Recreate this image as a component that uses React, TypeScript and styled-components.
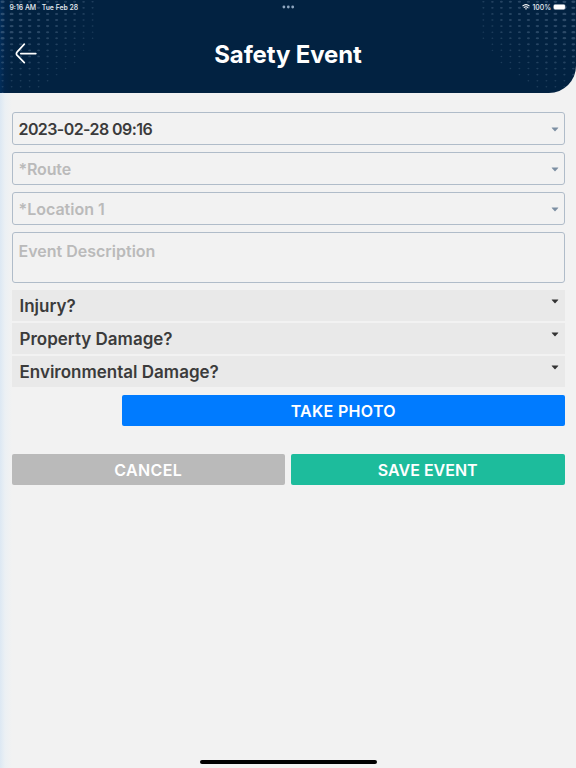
import React from "react";
import styled, { createGlobalStyle } from "styled-components";

const GlobalStyle = createGlobalStyle`
  * { box-sizing: border-box; }
  body { margin: 0; background: #f2f2f2; }
  button { font-family: inherit; }
`;

const Screen = styled.div`
  display: flex;
  flex-direction: column;
  width: 576px;
  height: 768px;
  overflow: hidden;
  color: #3b3b3b;
  font-family: "Inter", "Liberation Sans", sans-serif;
  font-weight: 600;
  background: linear-gradient(90deg, #dce8f3 0, #ebf0f4 5px, #f2f2f2 12px);
`;

const Header = styled.header`
  position: relative;
  flex: none;
  height: 93.4px;
  border-bottom-right-radius: 27px;
  overflow: hidden;
  color: #fff;
  background: linear-gradient(90deg, #022d5a 0, #022448 5px, #022241 12px);
`;

const Halftone = styled.svg`
  position: absolute;
  inset: 0;
  width: 576px;
  height: 94px;
  fill: #6f8aa6;
`;

const StatusBar = styled.div`
  position: relative;
  display: grid;
  grid-template-columns: 1fr auto 1fr;
  align-items: center;
  height: 14px;
  padding: 0 9px 0 9.5px;
  font-size: 6.9px;
  font-weight: 500;
  color: #e8edf2;
`;

const Clock = styled.div`
  display: flex;
  gap: 5.5px;
  white-space: nowrap;
`;

const Multitask = styled.svg`
  width: 13px;
  height: 4px;
  fill: #8fa6bf;
`;

const DeviceStatus = styled.div`
  display: flex;
  align-items: center;
  justify-content: flex-end;
  gap: 2px;
`;

const WifiGlyph = styled.svg`
  width: 8px;
  height: 6px;
`;

const BatteryGlyph = styled.svg`
  width: 14px;
  height: 6px;
`;

const TitleBar = styled.div`
  position: relative;
  display: grid;
  grid-template-columns: 50px 1fr 50px;
  align-items: center;
  height: 80px;
`;

const BackButton = styled.button`
  display: flex;
  width: 50px;
  height: 30px;
  padding: 4px 0 0 14px;
  border: 0;
  background: none;
`;

const Title = styled.h1`
  margin: 2px 0 0;
  font-size: 24px;
  font-weight: 650;
  line-height: 30px;
  letter-spacing: -0.12px;
  text-align: center;
`;

const Form = styled.main`
  display: flex;
  flex-direction: column;
  padding: 19px 11.5px 0;
`;

const FieldStack = styled.div`
  display: flex;
  flex-direction: column;
  gap: 7px;
`;

const SelectField = styled.div<{ $filled?: boolean; $tracking?: number }>`
  display: flex;
  align-items: center;
  justify-content: space-between;
  height: 33px;
  padding: 1px 5px 0 6px;
  border: 1px solid #b0bcc9;
  border-radius: 3px;
  font-size: 16px;
  color: ${(p) => (p.$filled ? "#3b3b3b" : "#bababa")};
  letter-spacing: ${(p) => p.$tracking ?? 0}px;
`;

const DescriptionField = styled.div`
  height: 51px;
  padding: 8px 6px;
  border: 1px solid #b0bcc9;
  border-radius: 3px;
  font-size: 16px;
  line-height: 20px;
  color: #bababa;
`;

const SectionStack = styled.div`
  display: flex;
  flex-direction: column;
  gap: 2px;
  margin-top: 7px;
`;

const Section = styled.div`
  display: flex;
  align-items: flex-start;
  justify-content: space-between;
  height: 31px;
  padding: 5px 6px 0 8px;
  font-size: 17px;
  line-height: 23px;
  background: #e9e9e9;
`;

const Caret = styled.svg<{ $dark?: boolean }>`
  flex: none;
  width: 8px;
  height: 5px;
  margin-top: ${(p) => (p.$dark ? 4 : 1)}px;
  fill: ${(p) => (p.$dark ? "#333" : "#7d8fa3")};
`;

const PhotoRow = styled.div`
  display: flex;
  padding-left: 110.5px;
  margin-top: 8px;
`;

const ActionRow = styled.div`
  display: flex;
  gap: 6px;
  margin-top: 28px;
`;

const ActionButton = styled.button<{ $color: string; $tracking?: number }>`
  flex: 1;
  height: 31px;
  padding: 1px 0 0;
  border: 0;
  border-radius: 2px;
  color: #fff;
  font-size: 16px;
  font-weight: 600;
  letter-spacing: ${(p) => p.$tracking ?? 0}px;
  background: ${(p) => p.$color};
`;

const HomeIndicator = styled.div`
  align-self: center;
  width: 177px;
  height: 3.4px;
  margin: auto 0 4.3px;
  border-radius: 2px;
  background: #000;
`;

// Number of dots in each column, counted from the screen edge inwards.
const columnDots = [16, 15, 15, 15, 15, 14, 13, 12, 11, 9, 7];

function DotPattern() {
  return (
    <Halftone viewBox="0 0 576 94" aria-hidden="true">
      {columnDots.flatMap((count, col) =>
        Array.from({ length: count }, (_, row) => {
          const weight = Math.min(1, Math.max(0.15, (count - row) / 10)) * (1 - col * 0.055);
          const x = 2.6 + col * 9;
          const y = 1.8 + row * 6.07;
          const rx = 0.75 + weight * 1.35;
          const ry = 0.65 + weight * 0.55;
          const opacity = 0.24 + weight * 0.16;
          return (
            <g key={`${col}-${row}`} opacity={opacity}>
              <ellipse cx={x} cy={y} rx={rx} ry={ry} />
              <ellipse cx={576 - x} cy={y} rx={rx} ry={ry} />
            </g>
          );
        })
      )}
    </Halftone>
  );
}

function DropCaret({ dark }: { dark?: boolean }) {
  return (
    <Caret $dark={dark} viewBox="0 0 8 5" aria-hidden="true">
      <path d="M1 .6h6q.6 0 .2.5L4.5 4q-.5.5-1 0L.8 1.1Q.4.6 1 .6Z" />
    </Caret>
  );
}

export default function App() {
  return (
    <>
      <GlobalStyle />
      <Screen>
        <Header>
          <DotPattern />
          <StatusBar>
            <Clock>
              <span>9:16 AM</span>
              <span>Tue Feb 28</span>
            </Clock>
            <Multitask viewBox="0 0 13 4">
              <circle cx="1.9" cy="2" r="1.4" />
              <circle cx="6.3" cy="2" r="1.4" />
              <circle cx="10.7" cy="2" r="1.4" />
            </Multitask>
            <DeviceStatus>
              <WifiGlyph viewBox="0 0 8 6" fill="none" stroke="#fff" strokeWidth="1.1">
                <path d="M.5 2.2Q4-.9 7.5 2.2M1.8 3.7q2.2-1.9 4.4 0" />
                <path d="M4 5.8 2.9 4.7q1.1-.9 2.2 0Z" fill="#fff" stroke="none" />
              </WifiGlyph>
              <span>100%</span>
              <BatteryGlyph viewBox="0 0 14 6">
                <rect x=".3" y=".3" width="12.2" height="5.4" rx="1.6" fill="#8495a8" />
                <rect x=".9" y=".8" width="11" height="4.4" rx="1.1" fill="#fff" />
                <path d="M13 2.1q.8.9 0 1.8Z" fill="#8495a8" />
              </BatteryGlyph>
            </DeviceStatus>
          </StatusBar>
          <TitleBar>
            <BackButton aria-label="Back">
              <svg width="24" height="22" viewBox="0 0 24 22" fill="none" stroke="#fff" strokeWidth="1.7" strokeLinecap="round" strokeLinejoin="round">
                <path d="M10.3 1.2 3.2 8.9Q1.6 10.7 3.2 12.4l7.1 7.2M6.8 10.6h15" />
              </svg>
            </BackButton>
            <Title>Safety Event</Title>
          </TitleBar>
        </Header>
        <Form>
          <FieldStack>
            <SelectField $filled $tracking={-0.58}>
              2023-02-28 09:16
              <DropCaret />
            </SelectField>
            <SelectField $tracking={-0.15}>
              *Route
              <DropCaret />
            </SelectField>
            <SelectField>
              *Location 1
              <DropCaret />
            </SelectField>
            <DescriptionField>Event Description</DescriptionField>
          </FieldStack>
          <SectionStack>
            {["Injury?", "Property Damage?", "Environmental Damage?"].map((label) => (
              <Section key={label}>
                {label}
                <DropCaret dark />
              </Section>
            ))}
          </SectionStack>
          <PhotoRow>
            <ActionButton $color="#007bff" $tracking={0.3}>TAKE PHOTO</ActionButton>
          </PhotoRow>
          <ActionRow>
            <ActionButton $color="#bababa" $tracking={0.4}>CANCEL</ActionButton>
            <ActionButton $color="#1dbc9c">SAVE EVENT</ActionButton>
          </ActionRow>
        </Form>
        <HomeIndicator />
      </Screen>
    </>
  );
}
